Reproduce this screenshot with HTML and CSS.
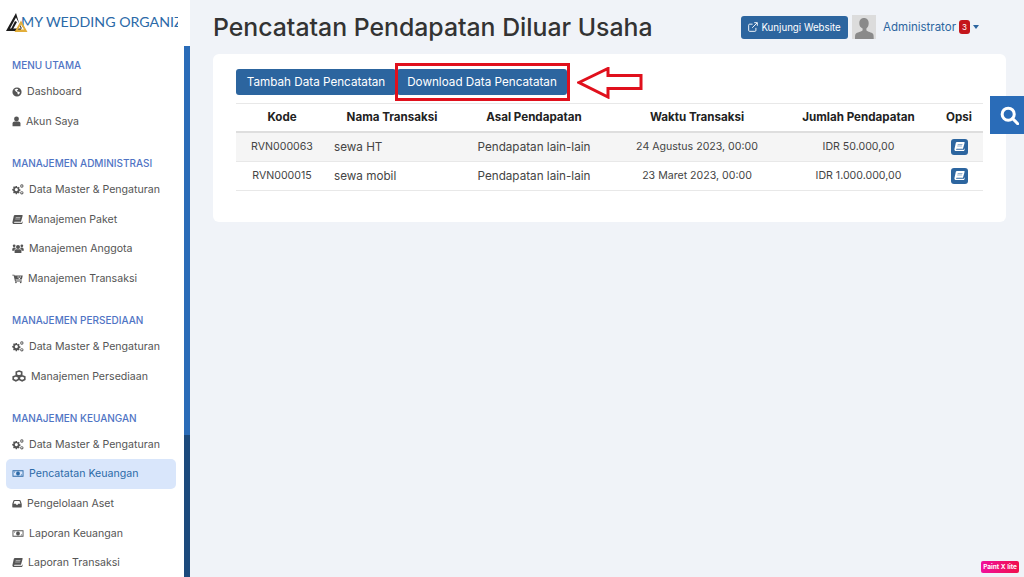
FILE: index.html
```html
<!DOCTYPE html>
<html lang="en">
<head>
  <meta charset="UTF-8" />
  <meta name="viewport" content="width=device-width, initial-scale=1" />
  <title>Pencatatan Pendapatan Diluar Usaha</title>
  <link rel="stylesheet" href="styles.css">
</head>
<body>
  <svg class="defs" width="0" height="0">
    <defs>
      <symbol id="i-globe" viewBox="0 0 12 12"><path fill-rule="evenodd" d="M6 .5a5.500 5.500 0 1 0 0 11A5.500 5.500 0 0 0 6 .5zM3 3.200l2-1.200 2.400.3-.4 1.300-1.300.5.7 1.200 2.200.3 1 1.300-1.600 2.100-1.200-.3-.3-2-1.800-1.200-1-1.200z"/></symbol>
      <symbol id="i-user" viewBox="0 0 10 12"><circle cx="5" cy="3.200" r="2.700"/><path d="M.6 11.200V8.300c0-1.500 1-2.300 2.300-2.300h4.200c1.300 0 2.300.8 2.300 2.300v2.900z"/></symbol>
      <symbol id="i-cogs" viewBox="0 0 13 12"><path fill-rule="evenodd" d="M4 2.200h1.400l.2 1.100.8.400.9-.6 1 1-.6.9.4.8 1.100.2v1.400l-1.100.2-.4.800.6.900-1 1-.9-.6-.8.400-.2 1.100H4l-.2-1.100-.8-.4-.9.600-1-1 .6-.9-.4-.8L.2 6.800V5.400l1.100-.2.4-.8-.6-.9 1-1 .9.600.8-.4zM4.700 4.400a1.700 1.700 0 1 0 0 3.400 1.700 1.700 0 0 0 0-3.400z"/><path fill-rule="evenodd" d="M10.700.4a1.800 1.800 0 1 0 0 3.600 1.800 1.800 0 0 0 0-3.600zm0 1a.8.8 0 1 1 0 1.600.8.8 0 0 1 0-1.600zM10.700 7.800a1.800 1.800 0 1 0 0 3.600 1.800 1.800 0 0 0 0-3.600zm0 1a.8.8 0 1 1 0 1.600.8.8 0 0 1 0-1.600z"/></symbol>
      <symbol id="i-book" viewBox="0 0 12 12"><path fill-rule="evenodd" d="M3.200 1h7.600c.6 0 .9.500.8 1L9.800 8.400H2.900c-.8 0-1 1.100-.1 1.100h8l.5-1.400.5.400-.8 2.500H2.400C1 11 .2 10 .5 8.700L2 2c.2-.6.600-1 1.200-1zM4.100 3.200l-.2.700h5.200l.2-.7zM3.600 5.100l-.2.700h5.200l.2-.7z"/></symbol>
      <symbol id="i-users" viewBox="0 0 13 12"><circle cx="6.500" cy="4.300" r="2.200"/><circle cx="2.300" cy="3" r="1.500"/><circle cx="10.700" cy="3" r="1.500"/><path d="M2.800 10.800V8.500c0-1 .7-1.800 1.700-1.800h4c1 0 1.700.8 1.700 1.800v2.300zM.2 7.500c0-1.300.6-2.600 1.800-2.600h1.500c.1.700.4 1.100.8 1.500-1.200.2-1.800 1-1.900 2.100H.2zM12.800 7.500c0-1.300-.6-2.600-1.800-2.600H9.500c-.1.700-.4 1.100-.8 1.500 1.200.2 1.800 1 1.900 2.100h2.200z"/></symbol>
      <symbol id="i-cart" viewBox="0 0 12 12"><path fill-rule="evenodd" d="M.3 1.800h2.200l.3 1h8.900l-.9 4.400H3.900l.2 1h6.700v1H3.300L1.800 2.800H.3zM6 3.700v1.200h1.400V3.700zM8.300 3.700v1.200h1.500V3.700zM7.300 5.500v1h1.400v-1z"/><circle cx="4.300" cy="10.300" r=".9"/><circle cx="9.500" cy="10.300" r=".9"/></symbol>
      <symbol id="i-cubes" viewBox="0 0 14 12"><path fill="none" d="M7 1l2.700 1.100v2.800L7 6 4.300 4.900V2.100zM3.900 5.800l2.700 1.100v2.700l-2.700 1.200-2.700-1.200V6.900zM10.100 5.800l2.700 1.100v2.700l-2.700 1.200-2.700-1.200V6.900z"/></symbol>
      <symbol id="i-money" viewBox="0 0 13 12"><path fill-rule="evenodd" d="M.5 2.500h12v7H.5zM1.500 3.500v5h10v-5zM6.500 3.900a2.100 2.100 0 1 1 0 4.200 2.100 2.100 0 0 1 0-4.200zM2.200 4.200h1.300L2.200 5.500zM10.800 7.800H9.500l1.300-1.300z"/></symbol>
      <symbol id="i-inbox" viewBox="0 0 11 12"><path fill-rule="evenodd" d="M2.500 2.200h6c.4 0 .7.200.9.600l1.300 3.700v3c0 .6-.4 1-1 1H1.300c-.6 0-1-.4-1-1v-3l1.300-3.700c.2-.4.500-.6.900-.6zm.3 1.100L1.700 6.300h2.400l.6 1.200h1.600l.6-1.200h2.400L8.200 3.300z"/></symbol>
    </defs>
  </svg>

  <div class="layout">
    <aside class="sidebar">
      <div class="sidebar-inner">
        <div class="brand">
          <span class="brand-name">MY WEDDING ORGANIZER</span>
          <svg class="brand-logo" width="22" height="20" viewBox="0 0 22 20">
            <path fill="#1c1c1c" fill-rule="evenodd" d="M10 0L0 18h15.500zM10 4.500L4 15.500h12z"/>
            <path fill="#e2ae3a" fill-rule="evenodd" d="M15 7.500L8.500 19H21.500zM15 11.500l-3 5h6z"/>
            <path fill="#1c1c1c" d="M9 8l2 1-4.500 8H4.500z"/>
          </svg>
        </div>

        <div class="nav-label">MENU UTAMA</div>
        <a class="nav-item"><svg width="10" height="10"><use href="#i-globe"/></svg>Dashboard</a>
        <a class="nav-item"><svg width="9" height="11"><use href="#i-user"/></svg>Akun Saya</a>

        <div class="nav-label nav-label-gap">MANAJEMEN ADMINISTRASI</div>
        <a class="nav-item"><svg width="12" height="11"><use href="#i-cogs"/></svg>Data Master &amp; Pengaturan</a>
        <a class="nav-item"><svg width="11" height="11"><use href="#i-book"/></svg>Manajemen Paket</a>
        <a class="nav-item"><svg width="12" height="11"><use href="#i-users"/></svg>Manajemen Anggota</a>
        <a class="nav-item"><svg width="11" height="11"><use href="#i-cart"/></svg>Manajemen Transaksi</a>

        <div class="nav-label nav-label-gap">MANAJEMEN PERSEDIAAN</div>
        <a class="nav-item"><svg width="12" height="11"><use href="#i-cogs"/></svg>Data Master &amp; Pengaturan</a>
        <a class="nav-item"><svg class="icon-line" width="14" height="12"><use href="#i-cubes"/></svg>Manajemen Persediaan</a>

        <div class="nav-label nav-label-gap">MANAJEMEN KEUANGAN</div>
        <a class="nav-item"><svg width="12" height="11"><use href="#i-cogs"/></svg>Data Master &amp; Pengaturan</a>
        <a class="nav-item active"><svg width="12" height="11"><use href="#i-money"/></svg>Pencatatan Keuangan</a>
        <a class="nav-item"><svg width="10" height="11"><use href="#i-inbox"/></svg>Pengelolaan Aset</a>
        <a class="nav-item"><svg width="12" height="11"><use href="#i-money"/></svg>Laporan Keuangan</a>
        <a class="nav-item"><svg width="11" height="11"><use href="#i-book"/></svg>Laporan Transaksi</a>
      </div>
      <div class="scrollbar">
        <div class="scroll-top"></div>
        <div class="scroll-thumb"></div>
        <div class="scroll-rest"></div>
      </div>
    </aside>

    <main class="main">
      <header class="topbar">
        <h1>Pencatatan Pendapatan Diluar Usaha</h1>
        <div class="top-actions">
          <a class="btn btn-small">
            <svg width="10" height="10" viewBox="0 0 12 12" fill="none" stroke="#fff" stroke-width="1.100"><path d="M9.500 7v3a1.200 1.200 0 0 1-1.200 1.200H2A1.200 1.200 0 0 1 .8 10V3.800A1.200 1.200 0 0 1 2 2.600h3.500M7.500.8h3.700v3.700M11 1L5 7"/></svg>
            Kunjungi Website
          </a>
          <div class="avatar">
            <svg width="24" height="24" viewBox="0 0 24 24"><path fill="#8a8a8a" d="M12 3c3 0 4.700 2.200 4.700 5.200 0 2.300-1 4.300-2.300 5.300v1.700c0 1 4 1.800 6 3 1.200.7 1.300 2 1.300 5.800H3c0-3.800.1-5.100 1.300-5.800 2-1.200 6.300-2 6.300-3v-1.700C8.300 12.500 7.300 10.500 7.300 8.200 7.300 5.200 9 3 12 3z"/></svg>
          </div>
          <span class="admin-name">Administrator</span>
          <span class="count-badge">3</span>
          <span class="caret"></span>
        </div>
      </header>

      <section class="card">
        <div class="card-actions">
          <a class="btn">Tambah Data Pencatatan</a>
          <a class="btn">Download Data Pencatatan</a>
        </div>
        <table class="data-table">
          <colgroup>
            <col class="col-kode"><col class="col-nama"><col class="col-asal"><col class="col-waktu"><col class="col-jumlah"><col class="col-opsi">
          </colgroup>
          <thead>
            <tr><th>Kode</th><th>Nama Transaksi</th><th>Asal Pendapatan</th><th>Waktu Transaksi</th><th>Jumlah Pendapatan</th><th>Opsi</th></tr>
          </thead>
          <tbody>
            <tr>
              <td>RVN000063</td><td class="left wide">sewa HT</td><td class="wide">Pendapatan lain-lain</td><td>24 Agustus 2023, 00:00</td><td>IDR 50.000,00</td>
              <td><a class="btn-icon"><svg width="11" height="11"><use href="#i-book"/></svg></a></td>
            </tr>
            <tr>
              <td>RVN000015</td><td class="left wide">sewa mobil</td><td class="wide">Pendapatan lain-lain</td><td>23 Maret 2023, 00:00</td><td>IDR 1.000.000,00</td>
              <td><a class="btn-icon"><svg width="11" height="11"><use href="#i-book"/></svg></a></td>
            </tr>
          </tbody>
        </table>
      </section>
    </main>
  </div>

  <!-- annotation drawn on top of the screenshot -->
  <div class="mark-box"></div>
  <svg class="mark-arrow" width="66" height="32" viewBox="0 0 66 32">
    <path fill="#fff" stroke="#e0101c" stroke-width="3" d="M2 15.500L31 1.500v7h33v13H31v8.500z"/>
  </svg>

  <a class="search-tab">
    <svg width="19" height="19" viewBox="0 0 22 22" fill="none" stroke="#fff" stroke-width="3.500"><circle cx="9.500" cy="9.500" r="7"/><path d="M14.500 14.500l6 6" stroke-linecap="round"/></svg>
  </a>
  <span class="paint-tag">Paint X lite</span>
</body>
</html>
```

FILE: styles.css
```css
* {
  box-sizing: border-box;
}

body {
  margin: 0;
  height: 100vh;
  overflow: hidden;
  font-family: 'Inter', 'Open Sans', sans-serif;
  background-color: #f0f3f8;
  color: #444;
}

.defs {
  position: absolute;
}

.layout {
  display: flex;
  height: 100%;
}

/* sidebar */
.sidebar {
  display: flex;
  width: 190px;
  flex-shrink: 0;
  height: 100%;
  background: #ffffff;
  overflow: hidden;
}

.sidebar-inner {
  width: 184px;
  padding-right: 8px;
}

.brand {
  position: relative;
  display: flex;
  align-items: center;
  width: 178px;
  height: 54px;
  padding: 0 0 12px 21px;
  overflow: hidden;
}

.brand-logo {
  position: absolute;
  left: 6px;
  top: 13px;
}

.brand-name {
  font-family: 'Lato', sans-serif;
  font-size: 14.200px;
  color: #2c6aa8;
  white-space: nowrap;
}

.nav-label {
  height: 23px;
  line-height: 23px;
  padding-left: 12px;
  font-size: 10px;
  font-weight: 500;
  color: #4f74c4;
  white-space: nowrap;
}

.nav-label-gap {
  margin-top: 15.600px;
}

.nav-item {
  display: flex;
  align-items: center;
  gap: 5px;
  height: 29.600px;
  margin-left: 6px;
  padding-left: 6px;
  border-radius: 5px;
  font-size: 10.600px;
  color: #555;
  fill: #555;
  stroke: #555;
  stroke-width: 0;
  white-space: nowrap;
}

.nav-item.active {
  background-color: #d9e6fb;
  color: #2c6aa8;
  fill: #2c6aa8;
}

.scrollbar {
  display: flex;
  flex-direction: column;
  width: 6px;
}

.scroll-top {
  height: 46px;
}

.scroll-thumb {
  height: 389px;
  background-color: #2a6cb8;
}

.scroll-rest {
  flex: 1;
  background-color: #1c4a7c;
}

/* main area */
.main {
  flex: 1;
  padding: 0 18px 0 23px;
}

.topbar {
  display: flex;
  justify-content: space-between;
  align-items: center;
  height: 54px;
  padding-right: 27px;
}

h1 {
  margin: 0;
  font-size: 24.800px;
  font-weight: 500;
  color: #333;
}

.top-actions {
  display: flex;
  align-items: center;
  font-size: 11px;
}

.btn {
  display: flex;
  align-items: center;
  justify-content: center;
  height: 26px;
  padding: 0 10px;
  border-radius: 3px;
  background-color: #2c659f;
  color: #fff;
  font-size: 11.700px;
  white-space: nowrap;
}

.btn-small {
  gap: 3px;
  height: 23px;
  width: 107px;
  padding: 0;
  font-size: 9.700px;
}

.avatar {
  width: 24px;
  height: 24px;
  margin-left: 4px;
  background-color: #dcdcdc;
}

.admin-name {
  margin-left: 7px;
  font-size: 11.500px;
  color: #2c659f;
}

.count-badge {
  width: 11px;
  height: 14px;
  line-height: 14px;
  margin-left: 3px;
  border-radius: 3px;
  background-color: #c4161c;
  color: #fff;
  font-size: 8px;
  text-align: center;
}

.caret {
  margin-left: 3px;
  border-top: 4px solid #2c659f;
  border-left: 3.500px solid transparent;
  border-right: 3.500px solid transparent;
}

.card {
  height: 168px;
  padding: 15px 23px;
  border-radius: 6px;
  background-color: #fff;
}

.card-actions {
  display: flex;
  gap: 1px;
  margin-bottom: 8px;
}

.card-actions .btn:last-child {
  width: 170px;
}

.card-actions .btn:first-child {
  width: 160px;
}

.data-table {
  width: 747px;
  table-layout: fixed;
  border-collapse: collapse;
  font-size: 10.600px;
}

.col-kode { width: 92px; }
.col-nama { width: 128px; }
.col-asal { width: 156px; }
.col-waktu { width: 170px; }
.col-jumlah { width: 153px; }
.col-opsi { width: 48px; }

.data-table th {
  height: 28px;
  border-top: 1px solid #e8e8e8;
  border-bottom: 2px solid #dedede;
  font-size: 11.600px;
  font-weight: 700;
  color: #222;
  text-align: center;
}

.data-table td {
  height: 29.500px;
  border-bottom: 1px solid #e8e8e8;
  text-align: center;
  color: #444;
}

.data-table td.wide {
  font-size: 11.700px;
}

.data-table td.left {
  padding-left: 6px;
  text-align: left;
}

.data-table tbody tr:first-child {
  background-color: #f5f5f5;
}

.btn-icon {
  display: inline-flex;
  align-items: center;
  justify-content: center;
  width: 17px;
  height: 16px;
  vertical-align: middle;
  border-radius: 3px;
  background-color: #2c659f;
  fill: #fff;
}

/* floating bits */
.mark-box {
  position: absolute;
  left: 395px;
  top: 63px;
  width: 175px;
  height: 38px;
  border: 3px solid #e0101c;
}

.mark-arrow {
  position: absolute;
  left: 577px;
  top: 67px;
}

.search-tab {
  position: absolute;
  left: 990px;
  top: 96px;
  display: flex;
  align-items: center;
  justify-content: center;
  width: 34px;
  height: 38px;
  padding-left: 5px;
  background-color: #2a6cb8;
}

.paint-tag {
  position: absolute;
  left: 981px;
  top: 561px;
  width: 38px;
  height: 12px;
  line-height: 12px;
  border-radius: 2px;
  background: linear-gradient(90deg, #f0109c, #f0104c);
  color: #fff;
  font-size: 6.500px;
  font-weight: 700;
  text-align: center;
  white-space: nowrap;
}

.icon-line {
  stroke-width: 1.600;
}
```
